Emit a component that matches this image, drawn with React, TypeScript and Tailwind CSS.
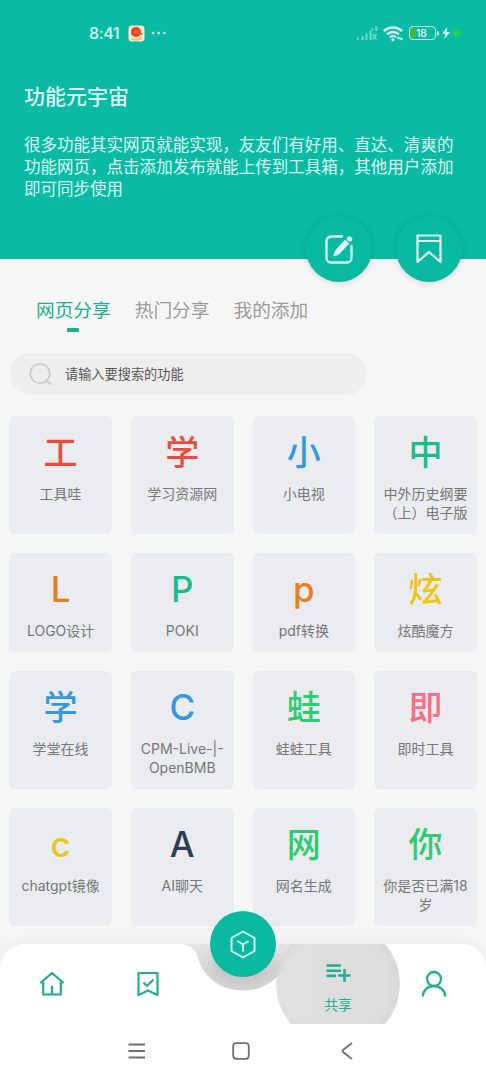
import React from "react";

type Tool = { glyph: string; name: string; color: string };

const tools: Tool[] = [
  { glyph: "工", name: "工具哇", color: "text-[#e74c3c]" },
  { glyph: "学", name: "学习资源网", color: "text-[#e74c3c]" },
  { glyph: "小", name: "小电视", color: "text-[#3498db]" },
  { glyph: "中", name: "中外历史纲要\n（上）电子版", color: "text-[#1abc8c]" },
  { glyph: "L", name: "LOGO设计", color: "text-[#e67e22]" },
  { glyph: "P", name: "POKI", color: "text-[#1abc8c]" },
  { glyph: "p", name: "pdf转换", color: "text-[#e67e22]" },
  { glyph: "炫", name: "炫酷魔方", color: "text-[#f1c40f]" },
  { glyph: "学", name: "学堂在线", color: "text-[#3498db]" },
  { glyph: "C", name: "CPM-Live-|-\nOpenBMB", color: "text-[#3498db]" },
  { glyph: "蛙", name: "蛙蛙工具", color: "text-[#2ecc71]" },
  { glyph: "即", name: "即时工具", color: "text-[#ff6b81]" },
  { glyph: "c", name: "chatgpt镜像", color: "text-[#e8c61c]" },
  { glyph: "A", name: "AI聊天", color: "text-[#2c3e50]" },
  { glyph: "网", name: "网名生成", color: "text-[#2ecc71]" },
  { glyph: "你", name: "你是否已满18\n岁", color: "text-[#2ecc71]" },
];

function StatusBar() {
  return (
    <div className="flex h-[22px] items-center pl-[89px] pr-[25px] text-[#dcfbf4]">
      <span className="w-[31px] whitespace-nowrap font-['Inter',sans-serif] text-[16px] leading-[22px] font-medium tracking-[-0.3px]">8:41</span>
      <svg className="ml-2" width="17" height="17" viewBox="0 0 17 17">
        <rect x="0.5" y="0.5" width="16" height="16" rx="3.5" fill="#fbe9d2" />
        <path d="M3 12.5q5 3 11-1v3q-5 2-10 .5z" fill="#f6c469" />
        <circle cx="8" cy="7" r="5" fill="#e0431c" />
        <path d="M4.500 7.500l3-3 3.500 1-1 4z" fill="#f0622a" />
        <circle cx="13.500" cy="9" r="1" fill="#e0431c" />
      </svg>
      <svg className="ml-[6px]" width="16" height="4" viewBox="0 0 16 4" fill="currentColor">
        <circle cx="2" cy="2" r="1.300" />
        <circle cx="7.700" cy="2" r="1.300" />
        <circle cx="13.400" cy="2" r="1.300" />
      </svg>
      <svg className="ml-auto" width="22" height="16" viewBox="0 0 22 16" stroke="#74dcc6" strokeWidth="1.900" fill="none">
        <path d="M2 12.500V15M6.500 11V15M10.500 8.500V15M14.500 5.500V15M20.300 1v5" />
        <path d="M16.500 9l4 5.500M20.500 9l-4 5.500M16.500 3v2.500" strokeWidth="1.300" />
      </svg>
      <svg className="ml-[5px]" width="22" height="17" viewBox="0 0 22 17" fill="none" stroke="currentColor" strokeWidth="2.500">
        <path d="M0.900 6.100a13 13 0 0 1 18.200 0" />
        <path d="M4.100 9.400a8.500 8.500 0 0 1 11.800 0" />
        <path d="M6.900 12.300a5 5 0 0 1 6.200 0" strokeWidth="2" />
        <circle cx="10" cy="14.800" r="1.600" fill="currentColor" stroke="none" />
        <path d="M14.500 13.500h5M16 12l-1.500 1.500M18 15l1.500-1.500" strokeWidth="1.400" />
      </svg>
      <div className="ml-[4px] flex h-[14px] w-[27px] items-center rounded-[4px] border-[1.500px] border-[#c5f6ea] p-[1px]">
        <span className="h-[10px] w-[4px] shrink-0 rounded-[1px] bg-[#52b80d]" />
        <span className="ml-[1px] font-['Inter',sans-serif] text-[11px] leading-[11px] font-medium tracking-[-0.5px] text-[#dcfbf4]">18</span>
      </div>
      <span className="ml-[1px] h-[5px] w-[2px] rounded-r-sm bg-[#c5f6ea]" />
      <svg className="ml-[3px]" width="8" height="12" viewBox="0 0 8 12" fill="currentColor">
        <path d="M5.300 0L0 6.800h3.200L2.400 12 8 5H4.700z" />
      </svg>
      <span className="ml-[3px] h-[8px] w-[8px] rounded-full bg-[#20d05c]" />
    </div>
  );
}

function RoundButton({ children }: { children: React.ReactNode }) {
  return (
    <button className="flex size-[66px] items-center justify-center rounded-full bg-[#0abaa0] text-[#dcfbf4] shadow-[0_1px_6px_rgba(0,0,0,0.14)]">
      {children}
    </button>
  );
}

function Header() {
  return (
    <header className="relative h-[259px] bg-[#0abaa2] pt-[22px]">
      <StatusBar />
      <h1 className="mt-[36px] pl-6 text-[21px] leading-[30px] font-medium text-[#dcfbf4]">功能元宇宙</h1>
      <p className="mt-[23px] pl-6 text-[16.530px] leading-[22px] whitespace-pre text-[#dcfbf4]">
        {"很多功能其实网页就能实现，友友们有好用、直达、清爽的\n功能网页，点击添加发布就能上传到工具箱，其他用户添加\n即可同步使用"}
      </p>
      <div className="absolute top-[216px] right-[24px] flex gap-6">
        <RoundButton>
          <svg width="28" height="29" viewBox="0 0 28 29" fill="none" stroke="currentColor" strokeWidth="2.300" strokeLinecap="round">
            <path d="M17 1.500H6a4.500 4.500 0 0 0-4.500 4.500v17a4.500 4.500 0 0 0 4.500 4.500h16a4.500 4.500 0 0 0 4.500-4.500V11" />
            <path d="M9 20.500l1.500-5L20.300 5l3.500 3.500-10 10.500z" fill="currentColor" strokeWidth="1" strokeLinejoin="round" />
            <path d="M24.200 3.600l.8.800" strokeWidth="4.500" />
          </svg>
        </RoundButton>
        <RoundButton>
          <svg width="26" height="30" viewBox="0 0 26 30" fill="none" stroke="currentColor" strokeWidth="2.200" strokeLinejoin="round">
            <path d="M1.500 1.500h23v26.500L13 18 1.500 28zM1.500 7h23" />
          </svg>
        </RoundButton>
      </div>
    </header>
  );
}

function Tabs() {
  return (
    <nav className="flex gap-6 pt-[36px] pl-9 text-[18.700px] leading-[27px] text-[#9b9b9b]">
      <button className="flex flex-col items-center text-[#17b092]">
        网页分享
        <span className="mt-[6px] h-[4px] w-[12px] rounded-[1px] bg-[#17b092]" />
      </button>
      <button className="flex">热门分享</button>
      <button className="flex">我的添加</button>
    </nav>
  );
}

function SearchBox() {
  return (
    <div className="mt-[21px] ml-[10px] flex h-[42px] w-[357px] items-center rounded-full bg-[#eeeeee] pl-[19px]">
      <svg width="24" height="24" viewBox="0 0 24 24" fill="none" stroke="#cbcbcb" strokeWidth="1.800" strokeLinecap="round">
        <circle cx="11" cy="11.500" r="9.700" />
        <path d="M18 18.500l3.500 3.500" />
      </svg>
      <span className="ml-3 text-[13.200px] leading-5 text-[#555]">请输入要搜索的功能</span>
    </div>
  );
}

function ToolCard({ tool }: { tool: Tool }) {
  const isLatin = /^[A-Za-z]$/.test(tool.glyph);
  return (
    <div className="rounded-[6px] bg-[#eaecef] pt-[11px] pb-[12px] text-center">
      <div className={`leading-[48px] font-medium ${isLatin ? "pt-[1px] -mb-[1px] font-['Inter',sans-serif] text-[35px]" : "text-[34px]"} ${tool.color}`}>
        {tool.glyph}
      </div>
      <div className="mt-[9px] font-['Inter','Noto_Sans_CJK_SC',sans-serif] text-[14px] leading-[19px] whitespace-pre text-[#777]">{tool.name}</div>
    </div>
  );
}

function BottomNav() {
  return (
    <nav className="relative flex h-[80px] shrink-0 rounded-t-[24px] bg-white text-[#20ae90] shadow-[0_-3px_14px_rgba(0,0,0,0.05)]">
      <svg className="absolute top-0 left-[183px]" width="120" height="49" viewBox="0 0 120 49">
        <defs>
          <radialGradient id="notch" gradientUnits="userSpaceOnUse" cx="60" cy="2" r="51">
            <stop offset="0.620" stopColor="#c6c6c8" />
            <stop offset="1" stopColor="#dadada" />
          </radialGradient>
          <linearGradient id="fade" x1="0" x2="0" y1="0" y2="1">
            <stop offset="0" stopColor="#e6e6e6" stopOpacity="1" />
            <stop offset="0.600" stopColor="#e6e6e6" stopOpacity="0" />
          </linearGradient>
        </defs>
        <path d="M0 0C10 2 13 7 15 14C21 34 38 46.500 60 46.500S99 34 105 14C107 7 110 2 120 0Z" fill="url(#notch)" />
        <path d="M0 0C10 2 13 7 15 14C21 34 38 46.500 60 46.500S99 34 105 14C107 7 110 2 120 0Z" fill="url(#fade)" />
      </svg>
      <div className="absolute inset-0 overflow-hidden">
        <div className="absolute top-[-22px] left-[276px] size-[124px] rounded-full bg-[radial-gradient(circle,#dedede_55%,#d8d8d8_70%)] mask-[linear-gradient(to_right,rgba(0,0,0,0.8),black_35%)]" />
      </div>
      <div className="absolute top-[-33px] left-[210px] flex size-[66px] items-center justify-center rounded-full bg-[#0abaa0] text-[#dcfbf4]">
        <svg width="26" height="29" viewBox="0 0 26 29" fill="none" stroke="currentColor" strokeWidth="2" strokeLinejoin="round">
          <path d="M13 1.500l11.500 6.500v13L13 27.500 1.500 21V8z" />
          <path d="M7.500 11l5.500 3.500 5.500-3.500M13 14.500v7" />
        </svg>
      </div>
      <div className="relative flex w-[104px] items-center justify-center">
        <svg width="26" height="26" viewBox="0 0 26 26" fill="none" stroke="currentColor" strokeWidth="2.200" strokeLinejoin="round" strokeLinecap="round">
          <path d="M2 11.500L13 2l11 9.500M4.200 10.500V23.500h17.600V10.500M13 23v-7.500" />
        </svg>
      </div>
      <div className="relative flex w-[88px] items-center justify-center">
        <svg width="22" height="26" viewBox="0 0 22 26" fill="none" stroke="currentColor" strokeWidth="2.200" strokeLinejoin="round">
          <path d="M1.500 2h19v22L11 19.500 1.500 24zM6.500 11.500l3.500 3.500 6.500-6.500" />
        </svg>
      </div>
      <div className="relative ml-[84px] flex w-[124px] flex-col items-center pt-[19px]">
        <svg width="26" height="20" viewBox="0 0 26 20" fill="none" stroke="currentColor" strokeWidth="2.600">
          <path d="M1.500 2.500h14.500M1.500 7.700h14.500M1.500 12.900h9.500M19.500 6v13M13 12.500h12.500" />
        </svg>
        <span className="mt-[11px] text-[13.800px] leading-[20px]">共享</span>
      </div>
      <div className="relative flex w-[67px] items-center justify-center">
        <svg width="26" height="28" viewBox="0 0 26 28" fill="none" stroke="currentColor" strokeWidth="2.300">
          <circle cx="13" cy="9" r="7" />
          <path d="M1.800 26.500C2 20 7 16 13 16s11 4 11.200 10.500" />
        </svg>
      </div>
    </nav>
  );
}

function SystemBar() {
  return (
    <div className="relative flex h-[56px] shrink-0 items-center bg-white pr-[132px] pb-[2px] pl-[128px] text-[#707070]">
      <svg width="18" height="18" viewBox="0 0 18 18" stroke="currentColor" strokeWidth="1.800">
        <path d="M0.500 2.500h16.500M0.500 9h16.500M0.500 15.500h16.500" />
      </svg>
      <svg className="ml-[86px]" width="18" height="18" viewBox="0 0 18 18" fill="none" stroke="currentColor" strokeWidth="1.800">
        <rect x="1.200" y="1.200" width="15.600" height="15.600" rx="3" />
      </svg>
      <svg className="ml-[91px]" width="12" height="18" viewBox="0 0 12 18" fill="none" stroke="currentColor" strokeWidth="1.800">
        <path d="M11 1L2.300 7.800q-1.200 1.200 0 2.400L11 17" />
      </svg>
    </div>
  );
}

export default function App() {
  return (
    <div className="flex h-[1080px] w-[486px] flex-col overflow-hidden bg-[#f6f6f6] font-['Noto_Sans_CJK_SC',sans-serif]">
      <Header />
      <main className="min-h-0 flex-1">
        <Tabs />
        <SearchBox />
        <div className="mt-[21px] grid grid-cols-4 gap-x-[19px] gap-y-[19px] pr-[9.200px] pl-[9.300px]">
          {tools.map((tool) => (
            <ToolCard key={tool.name} tool={tool} />
          ))}
        </div>
      </main>
      <BottomNav />
      <SystemBar />
    </div>
  );
}
